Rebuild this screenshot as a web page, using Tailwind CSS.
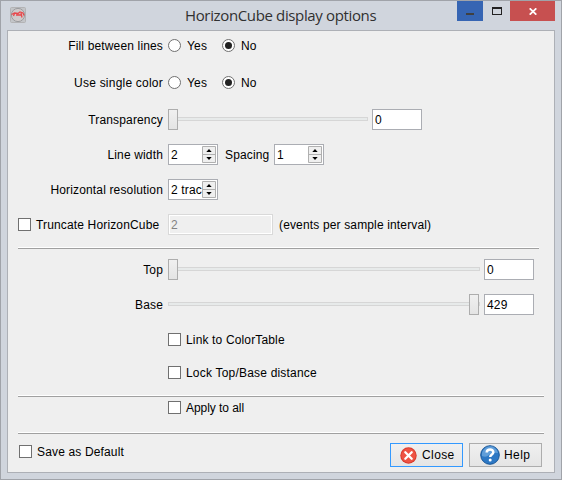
<!DOCTYPE html>
<html lang="en">
<head>
<meta charset="utf-8">
<title>HorizonCube display options</title>
<script src="https://cdn.jsdelivr.net/npm/@tailwindcss/browser@4"></script>
</head>
<body class="w-[562px] h-[480px] overflow-hidden">
<div class="w-[562px] h-[480px] bg-[#d0d5dd] border border-[#a0a3a9] flex flex-col font-['Liberation_Sans',Arial,sans-serif] text-[12px] leading-[21px] tracking-[0.15px] text-black whitespace-nowrap">
  <header class="h-[29px] flex items-start pl-[9px] pr-[6px] shrink-0">
    <svg class="mt-[6px] w-4 h-4 shrink-0" viewBox="0 0 16 16"><rect x=".5" y=".5" width="15" height="15" rx="1" fill="#c3c5c8" stroke="#b3b3b5"/><circle cx="8" cy="8" r="6.600" fill="#cfcaca" stroke="#9b9c9f"/><path d="M1.500 7.500 4.500 6 8 6.500 10 5 13 6 14 8.500M4.500 6.500 3.500 9M6 8H11M11 6l1 4.500M7.500 6v2" fill="none" stroke="#e8484c" stroke-width="1.300"/></svg>
    <h1 class="ml-[159px] w-[200px] text-[15px] leading-[29px] font-['Open_Sans',sans-serif] text-[#303030] tracking-[-0.36px]">HorizonCube display options</h1>
    <div class="ml-auto flex h-5">
      <div class="w-[26px] bg-[#3665b3] flex justify-center pt-3"><span class="w-2 h-[2px] bg-[#404040]"></span></div>
      <div class="w-[27px] flex justify-center pt-[6px] pl-[1px]"><span class="w-[10px] h-[8px] border border-t-2 border-[#222]"></span></div>
      <div class="w-[45px] bg-[#c75050] flex justify-center pt-[7px]"><svg class="w-2 h-[7px]" viewBox="0 0 8 7"><path d="M.7.3 7.300 6.700M7.300.3.7 6.700" stroke="#fff" stroke-width="1.700"/></svg></div>
    </div>
  </header>
  <main class="mx-[6px] w-[548px] h-[443px] bg-[#efefef] border border-[#adb0b6] flex flex-col">
    <div class="mt-[4px] h-[21px] flex items-center"><span class="w-[155px] text-right mr-[5px] pt-[2px]">Fill between lines</span>
      <span class="w-[54px] flex items-center gap-[6px]"><i class="size-[13px] rounded-full border border-[#707070] bg-white"></i><span class="pt-[2px]">Yes</span></span>
      <span class="flex items-center gap-[6px]"><i class="size-[13px] rounded-full border border-[#707070] bg-white flex items-center justify-center"><b class="size-[7px] rounded-full bg-[#222]"></b></i><span class="pt-[2px]">No</span></span></div>
    <div class="mt-[16px] h-[21px] flex items-center"><span class="w-[155px] text-right mr-[5px] pt-[2px] tracking-[0.22px]">Use single color</span>
      <span class="w-[54px] flex items-center gap-[6px]"><i class="size-[13px] rounded-full border border-[#707070] bg-white"></i><span class="pt-[2px]">Yes</span></span>
      <span class="flex items-center gap-[6px]"><i class="size-[13px] rounded-full border border-[#707070] bg-white flex items-center justify-center"><b class="size-[7px] rounded-full bg-[#222]"></b></i><span class="pt-[2px]">No</span></span></div>
    <div class="mt-[16px] h-[21px] flex items-center"><span class="w-[155px] text-right mr-[5px] pt-[2px]">Transparency</span>
      <span class="w-[200px] mr-[4px] h-[21px] flex items-center"><i class="w-[10px] h-[21px] border border-[#adadad] bg-linear-to-b from-[#f0f0f0] to-[#e4e4e4]"></i><i class="flex-1 h-[4px] mb-px border border-l-0 border-[#d6d6d6] bg-[#e7eaea]"></i></span>
      <span class="w-[50px] h-[21px] border border-[#abadb3] bg-white pl-[2px] leading-[20px]">0</span></div>
    <div class="mt-[14px] h-[21px] flex items-center"><span class="w-[155px] text-right mr-[5px] pt-[2px]">Line width</span>
      <span class="w-[50px] h-[21px] border border-[#abadb3] bg-white pl-[2px] flex leading-[20px]"><span class="w-[31px] overflow-hidden">2</span><svg class="w-[14px] h-[17px] mt-[1px]" viewBox="0 0 14 17"><path d="M.5.500h13v16H.5zM.5 8.500h13" fill="#efefef" stroke="#b0b0b0"/><path d="M7 3 9.700 6H4.300zM7 14 9.700 11H4.300z"/></svg></span>
      <span class="w-[49px] ml-[7px] pt-[2px]">Spacing</span>
      <span class="w-[50px] h-[21px] border border-[#abadb3] bg-white pl-[2px] flex leading-[20px]"><span class="w-[31px] overflow-hidden">1</span><svg class="w-[14px] h-[17px] mt-[1px]" viewBox="0 0 14 17"><path d="M.5.500h13v16H.5zM.5 8.500h13" fill="#efefef" stroke="#b0b0b0"/><path d="M7 3 9.700 6H4.300zM7 14 9.700 11H4.300z"/></svg></span></div>
    <div class="mt-[14px] h-[21px] flex items-center"><span class="w-[155px] text-right mr-[5px] pt-[2px]">Horizontal resolution</span>
      <span class="w-[50px] h-[21px] border border-[#abadb3] bg-white pl-[2px] flex leading-[20px]"><span class="w-[31px] overflow-hidden">2 trac</span><svg class="w-[14px] h-[17px] mt-[1px]" viewBox="0 0 14 17"><path d="M.5.500h13v16H.5zM.5 8.500h13" fill="#efefef" stroke="#b0b0b0"/><path d="M7 3 9.700 6H4.300zM7 14 9.700 11H4.300z"/></svg></span></div>
    <div class="mt-[14px] h-[21px] flex items-center pl-[10px]"><span class="w-[150px] flex items-center gap-[5px]"><i class="size-[13px] border border-[#707070] bg-white"></i><span class="pt-[2px]">Truncate HorizonCube</span></span>
      <span class="w-[105px] h-[21px] border border-[#d9d9d9] shadow-[inset_0_0_0_1px_#fff] pl-[2px] leading-[20px] text-[#838383]">2</span><span class="ml-[6px] pt-[2px]">(events per sample interval)</span></div>
    <div class="mt-[12px] ml-[10px] w-[521px] h-[2px] border-t border-t-white border-b border-b-[#a0a0a0]"></div>
    <div class="mt-[10px] h-[21px] flex items-center"><span class="w-[155px] text-right mr-[5px] pt-[2px]">Top</span>
      <span class="w-[312px] mr-[4px] h-[21px] flex items-center"><i class="w-[10px] h-[21px] border border-[#adadad] bg-linear-to-b from-[#f0f0f0] to-[#e4e4e4]"></i><i class="flex-1 h-[4px] mb-px border border-l-0 border-[#d6d6d6] bg-[#e7eaea]"></i></span>
      <span class="w-[50px] h-[21px] border border-[#abadb3] bg-white pl-[2px] leading-[20px]">0</span></div>
    <div class="mt-[14px] h-[21px] flex items-center"><span class="w-[155px] text-right mr-[5px] pt-[2px]">Base</span>
      <span class="w-[312px] mr-[4px] h-[21px] flex items-center"><i class="flex-1 h-[4px] mb-px border border-r-0 border-[#d6d6d6] bg-[#e7eaea]"></i><i class="w-[10px] h-[21px] border border-[#adadad] bg-linear-to-b from-[#f0f0f0] to-[#e4e4e4]"></i><i class="w-px h-[4px] mb-px bg-[#d6d6d6]"></i></span>
      <span class="w-[50px] h-[21px] border border-[#abadb3] bg-white pl-[2px] leading-[20px]">429</span></div>
    <div class="mt-[14px] h-[21px] flex items-center gap-[5px] pl-[160px]"><i class="size-[13px] border border-[#707070] bg-white"></i><span class="pt-[2px]">Link to ColorTable</span></div>
    <div class="mt-[12px] h-[21px] flex items-center gap-[5px] pl-[160px]"><i class="size-[13px] border border-[#707070] bg-white"></i><span class="pt-[2px] tracking-[0.2px]">Lock Top/Base distance</span></div>
    <div class="mt-[12px] ml-[10px] w-[526px] h-[2px] border-t border-t-white border-b border-b-[#a0a0a0]"></div>
    <div class="h-[21px] flex items-center gap-[5px] pl-[160px]"><i class="size-[13px] border border-[#707070] bg-white"></i><span class="pt-[2px] tracking-[-0.05px]">Apply to all</span></div>
    <div class="mt-[14px] ml-[10px] w-[526px] h-[2px] border-t border-t-white border-b border-b-[#a0a0a0]"></div>
    <footer class="mt-[9px] h-[24px] flex items-start pl-[11px]">
      <span class="flex-1 flex items-center gap-[5px] h-[17px]"><i class="size-[13px] border border-[#707070] bg-white"></i><span class="pt-[2px]">Save as Default</span></span>
      <span class="w-[73px] h-[24px] leading-[22px] tracking-[0.4px] border border-[#3399ff] bg-linear-to-b from-[#f0f0f0] to-[#e5e5e5] flex items-center pl-[9px] gap-[5px]"><svg class="w-[17px] h-[17px]" viewBox="0 0 17 17"><circle cx="8.500" cy="8.500" r="8.200" fill="#d93a2c"/><circle cx="8.500" cy="8.500" r="7.200" fill="#ee5344"/><path d="M5.300 5.300l6.400 6.400M11.700 5.300l-6.400 6.400" stroke="#fff" stroke-width="2.300" stroke-linecap="round"/></svg>Close</span>
      <span class="ml-[6px] mr-[12px] w-[73px] h-[24px] leading-[22px] tracking-[0.4px] border border-[#adadad] bg-linear-to-b from-[#f0f0f0] to-[#e5e5e5] flex items-center pl-[10px] gap-[4px]"><svg class="w-5 h-5" viewBox="0 0 20 20"><circle cx="10" cy="10" r="9.300" fill="#2d78c4" stroke="#1b5797"/><path d="M2 11A8 8 0 0 1 18 8Q12 7 9 10T2 11" fill="#609ed9"/><path d="M6.700 7.500C6.900 3.500 13.500 3.500 13.300 7.500C13.200 9.500 10.200 9.700 10.200 12" fill="none" stroke="#fff" stroke-width="2.500"/><circle cx="10.200" cy="15" r="1.500" fill="#fff"/></svg>Help</span>
    </footer>
  </main>
</div>
</body>
</html>
